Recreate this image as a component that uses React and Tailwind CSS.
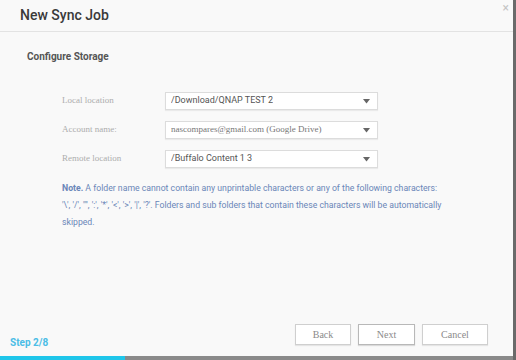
import React from 'react';

const rows = [
  { label: 'Local location', value: '/Download/QNAP TEST 2', serif: false },
  { label: 'Account name:', value: 'nascompares@gmail.com (Google Drive)', serif: true },
  { label: 'Remote location', value: '/Buffalo Content 1 3', serif: false },
];

function SelectBox({ value, serif }) {
  return (
    <div className="flex h-[18px] w-[213px] items-center justify-between border border-[#dcdcdc] bg-white pl-[5px] pr-[7px] shadow-[0_1px_1px_rgba(0,0,0,0.06)]">
      <span
        className={`truncate text-[9px] text-[#555] ${serif ? "font-['Liberation_Serif',serif] text-[#777]" : "font-['Roboto',sans-serif]"}`}
      >
        {value}
      </span>
      <svg width="7" height="5" viewBox="0 0 7 5">
        <path d="M0 0h7L3.5 4.5z" fill="#666" />
      </svg>
    </div>
  );
}

export default function App() {
  return (
    <div className="flex h-[360px] w-[516px] bg-[#f0f0f0] font-['Roboto',sans-serif]">
      <div className="flex flex-1 flex-col bg-[#f9f9f9]">
        {/* Header */}
        <div className="relative flex h-[32px] items-center border-b border-[#e3e3e3] pl-[20px]">
          <span className="text-[14px] font-medium text-[#3a3a3a]">New Sync Job</span>
          <span className="absolute right-[4px] top-[2px] text-[12px] leading-none text-[#c4c4c4]">×</span>
        </div>

        {/* Body */}
        <div className="flex flex-1 flex-col">
          <div className="mt-[17px] pl-[27px] text-[10px] font-bold text-[#555]">Configure Storage</div>

          <div className="mt-[28px] flex flex-col gap-[11px] pl-[62px]">
            {rows.map((r) => (
              <div key={r.label} className="flex items-center">
                <span className="w-[103px] font-['Liberation_Serif',serif] text-[9px] text-[#adadad]">{r.label}</span>
                <SelectBox value={r.value} serif={r.serif} />
              </div>
            ))}
          </div>

          <p className="mt-[12px] whitespace-nowrap pl-[62px] text-[8.7px] leading-[17px] text-[#6a86b8]">
            <span className="font-bold">Note.</span> A folder name cannot contain any unprintable characters or any of the following characters:
            <br />
            '\', '/', '"', ':', '*', '&lt;', '&gt;', '|', '?'. Folders and sub folders that contain these characters will be automatically
            <br />
            skipped.
          </p>

          <div className="mt-auto flex items-end justify-between pb-[11px] pl-[10px] pr-[25px]">
            <span className="mb-[-5px] text-[10px] font-bold text-[#4bbde6]">Step 2/8</span>
            <div className="flex gap-[7px]">
              <button className="h-[21px] w-[56px] border border-[#cfcfcf] bg-white font-['Liberation_Serif',serif] text-[10px] text-[#8a8a8a] shadow-[0_1px_1px_rgba(0,0,0,0.08)]">Back</button>
              <button className="h-[21px] w-[57px] border border-[#b8b8b8] bg-white font-['Liberation_Serif',serif] text-[10px] text-[#8a8a8a] shadow-[0_1px_1px_rgba(0,0,0,0.12)]">Next</button>
              <button className="h-[21px] w-[66px] border border-[#cfcfcf] bg-white font-['Liberation_Serif',serif] text-[10px] text-[#8a8a8a] shadow-[0_1px_1px_rgba(0,0,0,0.08)]">Cancel</button>
            </div>
          </div>
        </div>

        {/* Progress */}
        <div className="flex h-[4px] bg-[#8a8a8a]">
          <div className="w-[125px] bg-[#1fc6ea]" />
        </div>
      </div>
      <div className="w-[3px] bg-[#6a6a6a]" />
    </div>
  );
}
